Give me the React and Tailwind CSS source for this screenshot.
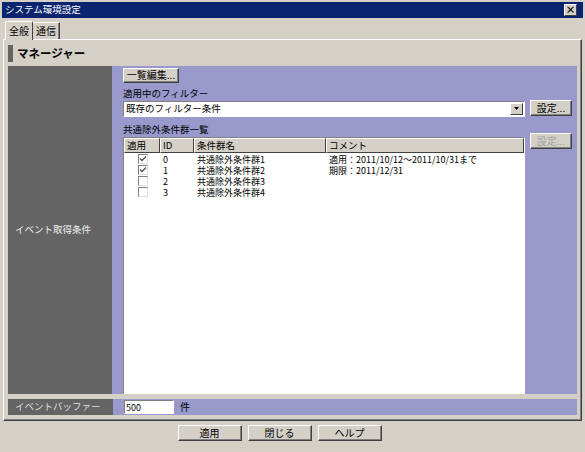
import React from "react";

const font = { fontFamily: '"Noto Sans CJK JP", "Liberation Sans", sans-serif' };

function Btn({ children, className = "", disabled = false }) {
  return (
    <div
      className={
        "flex items-center justify-center whitespace-nowrap bg-[#d4d0c8] border border-t-white border-l-white border-r-[#404040] border-b-[#404040] shadow-[inset_-1px_-1px_0_#808080] text-[10px] leading-none " +
        (disabled ? "text-[#a0a0a0] " : "text-black ") +
        className
      }
    >
      {children}
    </div>
  );
}

function Check({ checked }) {
  return (
    <div className="w-[10px] h-[10px] bg-white border border-t-[#808080] border-l-[#808080] border-r-[#e0e0e0] border-b-[#e0e0e0] flex items-center justify-center">
      {checked && (
        <svg width="8" height="8" viewBox="0 0 8 8">
          <path d="M1 3.5 L3 5.5 L7 1.5" stroke="#505050" strokeWidth="1.3" fill="none" />
        </svg>
      )}
    </div>
  );
}

const rows = [
  { c: true, id: "0", name: "共通除外条件群1", cm: "適用：2011/10/12～2011/10/31まで" },
  { c: true, id: "1", name: "共通除外条件群2", cm: "期限：2011/12/31" },
  { c: false, id: "2", name: "共通除外条件群3", cm: "" },
  { c: false, id: "3", name: "共通除外条件群4", cm: "" },
];

export default function App() {
  return (
    <div style={font} className="w-[585px] h-[452px] bg-[#d4d0c8] p-[2px] flex flex-col text-black overflow-hidden">
      {/* title bar */}
      <div className="h-[16px] bg-[#0a2470] flex items-center justify-between pl-[3px] pr-[6px]">
        <span className="text-white text-[9.5px] leading-none whitespace-nowrap">システム環境設定</span>
        <div className="w-[13px] h-[12px] bg-[#d4d0c8] border border-t-white border-l-white border-r-[#404040] border-b-[#404040] flex items-center justify-center">
          <span className="text-[10px] font-bold leading-none">×</span>
        </div>
      </div>
      {/* tabs */}
      <div className="flex items-end pl-[3px] mt-[2px] h-[19px]">
        <div className="h-[19px] px-[3px] border border-b-0 border-t-white border-l-white border-r-[#404040] rounded-t-[2px] flex items-center text-[10px] leading-none relative z-10 bg-[#d4d0c8] -mb-[1px]">
          全般
        </div>
        <div className="h-[17px] px-[3px] border border-b-0 border-t-white border-l-0 border-r-[#404040] shadow-[inset_-1px_0_0_#808080] flex items-center text-[10px] leading-none">
          通信
        </div>
      </div>
      {/* panel */}
      <div className="mx-[1px] h-[382px] border border-t-white border-l-white border-r-[#404040] border-b-[#404040] shadow-[inset_-1px_-1px_0_#808080] px-[4px] pt-[5px] flex flex-col">
        <div className="flex items-center h-[17px] gap-[4px]">
          <div className="w-[5px] h-[17px] bg-[#646464]" />
          <span className="text-[11.5px] font-bold leading-none whitespace-nowrap">マネージャー</span>
        </div>
        <div className="mt-[4px] flex h-[328px]">
          <div className="w-[105px] bg-[#646464] flex items-center pl-[7px]">
            <span className="text-[#eeeeee] text-[9.5px] leading-none whitespace-nowrap">イベント取得条件</span>
          </div>
          <div className="flex-1 bg-[#9999cc] flex pl-[11px] pr-[5px]">
            <div className="w-[402px] flex flex-col">
              <Btn className="mt-[2px] w-[56px] h-[15px]">一覧編集...</Btn>
              <div className="mt-[4px] text-[9.5px] leading-[13px] whitespace-nowrap">適用中のフィルター</div>
              <div className="mt-[1px] h-[16px] bg-white border border-t-[#808080] border-l-[#808080] border-r-white border-b-white flex items-center justify-between">
                <span className="pl-[2px] text-[9.5px] leading-none whitespace-nowrap">既存のフィルター条件</span>
                <div className="w-[13px] h-[12px] mr-[1px] bg-[#d4d0c8] border border-t-white border-l-white border-r-[#404040] border-b-[#404040] flex items-center justify-center">
                  <svg width="5" height="3" viewBox="0 0 5 3"><path d="M0 0 H5 L2.5 3 Z" fill="#000" /></svg>
                </div>
              </div>
              <div className="mt-[6px] text-[9.5px] leading-[13px] whitespace-nowrap">共通除外条件群一覧</div>
              <div className="mt-[1px] h-[259px] bg-white border border-t-[#808080] border-l-[#808080] border-r-white border-b-white flex flex-col">
                <div className="flex h-[15px] text-[9.5px] leading-none">
                  {[["適用", "w-[36px]"], ["ID", "w-[34px]"], ["条件群名", "w-[132px]"], ["コメント", "flex-1"]].map(([t, w]) => (
                    <div key={t} className={w + " bg-[#d4d0c8] border border-t-white border-l-white border-r-[#404040] border-b-[#404040] flex items-center pl-[2px] whitespace-nowrap"}>
                      {t}
                    </div>
                  ))}
                </div>
                <div className="pt-[1px] flex flex-col">
                  {rows.map((r) => (
                    <div key={r.id} className="flex h-[11px] items-center text-[9px] leading-[11px] whitespace-nowrap">
                      <div className="w-[36px] pl-[14px]"><Check checked={r.c} /></div>
                      <div className="w-[34px] pl-[3px]">{r.id}</div>
                      <div className="w-[132px] pl-[3px]">{r.name}</div>
                      <div className="flex-1 pl-[3px]">{r.cm}</div>
                    </div>
                  ))}
                </div>
              </div>
            </div>
            <div className="ml-[5px] flex flex-col">
              <Btn className="mt-[34px] w-[42px] h-[16px]">設定...</Btn>
              <Btn disabled className="mt-[17px] w-[42px] h-[16px]">設定...</Btn>
            </div>
          </div>
        </div>
        <div className="h-[5px]" />
        <div className="flex h-[16px]">
          <div className="w-[105px] bg-[#646464] flex items-center pl-[7px]">
            <span className="text-[#dddddd] text-[9.5px] leading-none whitespace-nowrap">イベントバッファー</span>
          </div>
          <div className="flex-1 bg-[#9999cc] flex items-center pl-[11px]">
            <div className="w-[50px] h-[14px] bg-white border border-t-[#808080] border-l-[#808080] border-r-white border-b-white flex items-center pl-[1px] text-[9px] leading-none">500</div>
            <span className="ml-[6px] text-[10px] leading-none">件</span>
          </div>
        </div>
      </div>
      {/* bottom buttons */}
      <div className="flex justify-center gap-[6px] mt-[4px] pr-[26px]">
        <Btn className="w-[64px] h-[16px]">適用</Btn>
        <Btn className="w-[64px] h-[16px]">閉じる</Btn>
        <Btn className="w-[64px] h-[16px]">ヘルプ</Btn>
      </div>
    </div>
  );
}
